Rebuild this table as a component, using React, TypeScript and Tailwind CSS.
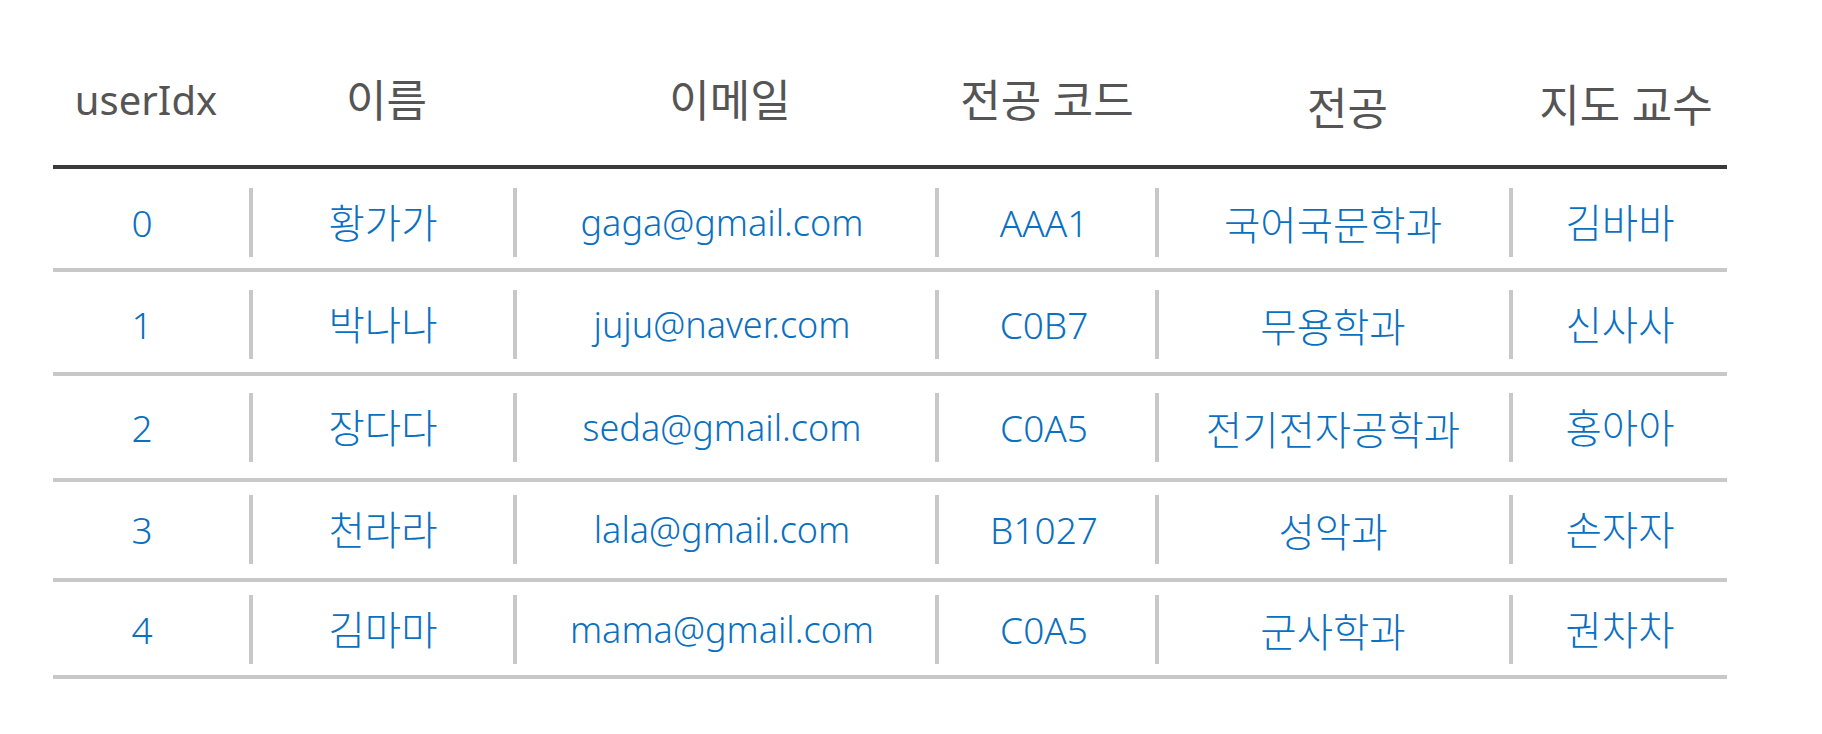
const columns = [
  { key: "idx", label: "userIdx", width: "w-[196px]", head: "pt-[70px] pr-[10px] text-[40px]", body: "pr-[18px] text-[37px]" },
  { key: "name", label: "이름", width: "w-[260px]", head: "pt-[70px] pl-[7px] text-[44px]", body: "text-[39.5px]" },
  { key: "email", label: "이메일", width: "w-[418px]", head: "pt-[70px] pl-[8px] text-[44px]", body: "pr-[8px] text-[36px]" },
  { key: "code", label: "전공 코드", width: "w-[216px]", head: "pt-[70px] text-[44px]", body: "pr-[6px] text-[37px]" },
  { key: "major", label: "전공", width: "w-[350px]", head: "pt-[78px] pl-[27px] text-[44px]", body: "pt-[4px] pr-[2px] text-[39.5px]" },
  { key: "prof", label: "지도 교수", width: "w-[214px]", head: "pt-[75px] pl-[12px] text-[44px]", body: "text-[39.5px]" },
] as const;

type Row = { idx: string; name: string; email: string; code: string; major: string; prof: string };

const rows: Row[] = [
  { idx: "0", name: "황가가", email: "gaga@gmail.com", code: "AAA1", major: "국어국문학과", prof: "김바바" },
  { idx: "1", name: "박나나", email: "juju@naver.com", code: "C0B7", major: "무용학과", prof: "신사사" },
  { idx: "2", name: "장다다", email: "seda@gmail.com", code: "C0A5", major: "전기전자공학과", prof: "홍아아" },
  { idx: "3", name: "천라라", email: "lala@gmail.com", code: "B1027", major: "성악과", prof: "손자자" },
  { idx: "4", name: "김마마", email: "mama@gmail.com", code: "C0A5", major: "군사학과", prof: "권차차" },
];

// vertical padding per row, the lines in the picture are not evenly spaced
const rowPad = [
  "pt-[19px] pb-[11px]",
  "pt-[18px] pb-[13px]",
  "pt-[17px] pb-[16px]",
  "pt-[13px] pb-[14px]",
  "pt-[13px] pb-[11px]",
];

const font = "font-['Noto_Sans','Noto_Sans_CJK_KR',sans-serif]";

export default function App() {
  return (
    <div className={`min-h-[734px] w-[1822px] bg-white pl-[53px] ${font}`}>
      <div className="w-[1674px]">
        <div className="flex h-[169px] border-b-4 border-[#3a3a3a]">
          {columns.map((c, i) => (
            <div key={c.key} className="flex">
              {i > 0 && <div className="w-[4px]" />}
              <div className={`${c.width} ${c.head} text-center leading-[60px] text-[#555555]`}>
                {c.label}
              </div>
            </div>
          ))}
        </div>

        {rows.map((r, ri) => (
          <div
            key={r.idx}
            className={`flex items-center border-b-4 border-[#c8c8c8] ${rowPad[ri]}`}
          >
            {columns.map((c, i) => (
              <div key={c.key} className="flex items-center">
                {i > 0 && <div className="h-[69px] w-[4px] bg-[#c8c8c8]" />}
                <div
                  className={`${c.width} ${c.body} text-center font-light leading-[50px] text-[#0b70bf]`}
                >
                  {r[c.key]}
                </div>
              </div>
            ))}
          </div>
        ))}
      </div>
    </div>
  );
}
